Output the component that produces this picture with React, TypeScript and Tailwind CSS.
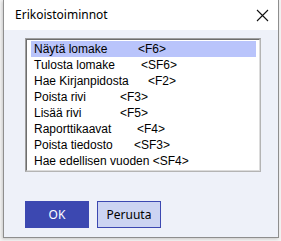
const items = [
  { label: "Näytä lomake", key: "<F6>", w: "w-[104px]" },
  { label: "Tulosta lomake", key: "<SF6>", w: "w-[107px]" },
  { label: "Hae Kirjanpidosta", key: "<F2>", w: "w-[114px]" },
  { label: "Poista rivi", key: "<F3>", w: "w-[86px]" },
  { label: "Lisää rivi", key: "<F5>", w: "w-[86px]" },
  { label: "Raporttikaavat", key: "<F4>", w: "w-[103px]" },
  { label: "Poista tiedosto", key: "<SF3>", w: "w-[100px]" },
  { label: "Hae edellisen vuoden", key: "<SF4>", w: "" },
];

export default function App() {
  return (
    <div className="w-[281px] h-[241px] bg-[#f3f3f3] overflow-hidden">
      <div className="ml-[3px] w-[276px] h-[238px] flex flex-col border-x border-b border-[#8e8e8e] bg-[#eef1f9] shadow-[-1px_1px_3px_rgba(0,0,0,0.18)]">
        {/* title bar */}
        <div className="h-[30px] bg-white flex items-center justify-between pl-[11px] pr-[8px] font-['Noto_Sans',sans-serif] text-[12px] text-black">
          <span className="-mt-[1px]">Erikoistoiminnot</span>
          <svg width="13" height="13" viewBox="0 0 13 13" className="mr-[1px]">
            <path d="M1 1 L12 12 M12 1 L1 12" stroke="#111" strokeWidth="1.1" />
          </svg>
        </div>

        <div className="flex-1 pl-[21px] pt-[8px]">
          {/* list box */}
          <div className="w-[236px] h-[134px] border border-t-[#a0a0a0] border-l-[#a0a0a0] border-r-[#b4b4b4] border-b-[#b4b4b4]">
            <div className="h-full bg-white border border-t-[#6e6e6e] border-l-[#6e6e6e] border-r-[#dcdcdc] border-b-[#dcdcdc] pt-[1px] pl-[4px] pr-[3px] font-['Liberation_Sans',Arial,sans-serif] text-[12px] text-black">
              {items.map((it, i) => (
                <div
                  key={i}
                  className={`h-[16px] leading-[16px] pl-[3px] whitespace-pre ${i === 0 ? "bg-[#b9c4fb]" : ""}`}
                >
                  <span className={it.w ? `inline-block ${it.w}` : ""}>
                    {it.label}
                    {it.w ? "" : " "}
                  </span>
                  <span>{it.key}</span>
                </div>
              ))}
            </div>
          </div>

          {/* buttons */}
          <div className="flex gap-[8px] mt-[29px] font-['Noto_Sans',sans-serif] text-[12px]">
            <button className="w-[64px] h-[27px] bg-[#3c48b1] text-white">OK</button>
            <button className="w-[64px] h-[27px] bg-[#ccd4f2] border border-[#3c48b1] text-black">
              Peruuta
            </button>
          </div>
        </div>
      </div>
    </div>
  );
}
